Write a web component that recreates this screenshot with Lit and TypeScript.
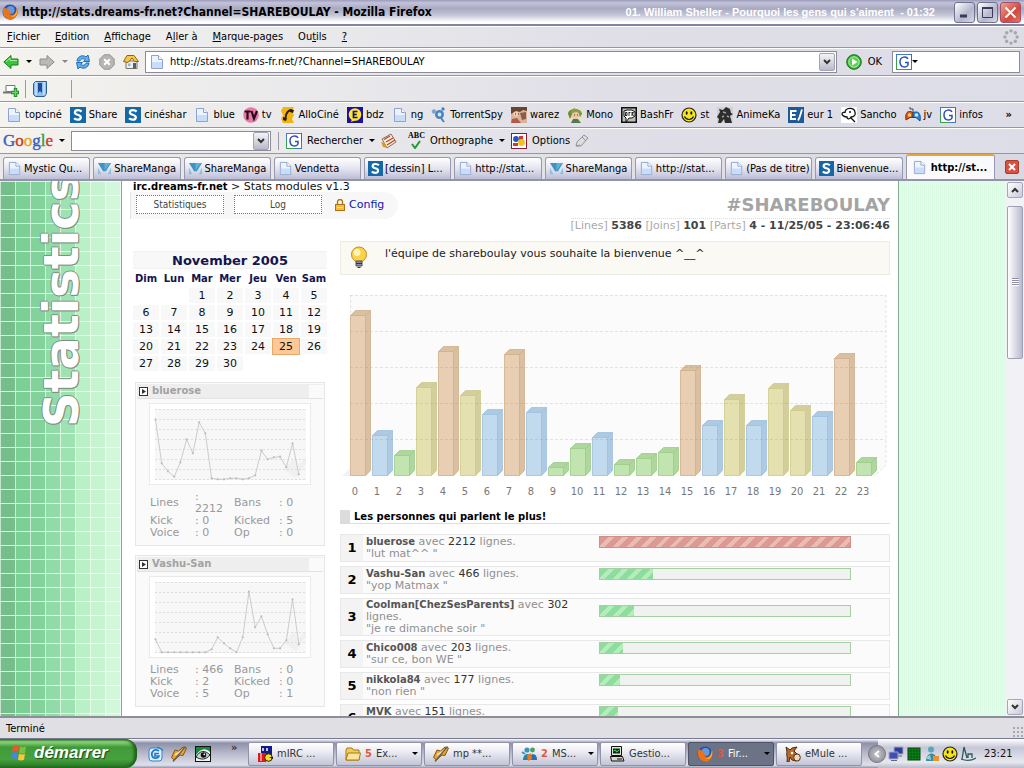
import { LitElement, html, svg, css, nothing, TemplateResult } from "lit";
import { customElement } from "lit/decorators.js";
import { styleMap } from "lit/directives/style-map.js";
import { classMap } from "lit/directives/class-map.js";

const icon = (body: TemplateResult, size = 16) =>
  html`<svg class="icon" width=${size} height=${size} viewBox="0 0 16 16" aria-hidden="true">${body}</svg>`;

const ICONS: Record<string, TemplateResult> = {
  page: svg`<path d="M2.5 1.5h7l4 4v9h-11z" fill="#eef4ff" stroke="#8ea4cc"/><path d="M3 8h10v6H3z" fill="#c9dcfa"/><path d="M9.5 1.5v4h4" fill="#fff" stroke="#8ea4cc"/>`,
  share: svg`<rect width="16" height="16" fill="#1468a8"/><path d="M11.6 4.6C10.600 3.600 9.300 3.200 8 3.200 6.200 3.200 4.900 4 4.900 5.400c0 3 5.900 1.700 5.900 4.800 0 1.600-1.400 2.500-3.200 2.500-1.300 0-2.600-.4-3.500-1.400" fill="none" stroke="#fff" stroke-width="2.300"/>`,
  tv: svg`<circle cx="8" cy="8" r="7.800" fill="#e87aa8"/><path d="M1.500 4.500h6M4.500 4.500v8M8.500 4l2.500 7.500L14 4" fill="none" stroke="#2a0a1a" stroke-width="2.200"/>`,
  allo: svg`<path d="M3 0h11l-2 4 2 4-2 4 2 4H3l-2-4 2-4-2-4z" fill="#f2b411"/><path d="M12 3C8 3 6 6 5.500 11" fill="none" stroke="#2b1a00" stroke-width="1.800"/><path d="M10 2l4 1-1 3-3-1zM3 10l4 1-1 3-3-1z" fill="#2b1a00"/>`,
  bdz: svg`<rect width="16" height="16" fill="#1b0fa8"/><circle cx="8" cy="7.500" r="6.300" fill="#ffe82a"/><path d="M5 12l-1 3 5-2z" fill="#ffe82a"/><path d="M10.500 4.500H6.500v6h4M6.500 7.500h3.300" fill="none" stroke="#1b0f60" stroke-width="1.700"/>`,
  torrent: svg`<circle cx="8.500" cy="7.500" r="3.200" fill="#d8e6f4" stroke="#4c83bd" stroke-width="2.600"/><circle cx="3" cy="4.500" r="2.200" fill="#7aa6d4"/><circle cx="12" cy="2" r="1.700" fill="#4c83bd"/><path d="M10 11l3 4" stroke="#4c83bd" stroke-width="2"/>`,
  warez: svg`<rect width="16" height="16" fill="#d9b49a"/><path d="M0 0h16v4l-4-1-3 2-4-1-5 3z" fill="#6a4536"/><circle cx="5" cy="7" r="2.500" fill="#f0cdb0"/><path d="M9 6l6-1v7l-4 1z" fill="#8f5c4a"/><path d="M1 12l5-1 4 5H0z" fill="#b35a48"/><path d="M4 7h1M7 7h1" stroke="#322"/>`,
  mono: svg`<rect width="16" height="16" fill="#e5e3d4"/><path d="M1 7C1 1 14 0 15 7l-2 3-2-4-6 2-2 4z" fill="#6f8a42"/><circle cx="8.500" cy="8.500" r="3.800" fill="#eec8a2"/><path d="M3 6l8-1 3 5-1-6-6-3z" fill="#8aa04f"/><path d="M4 16l2-4h5l3 4z" fill="#4f7a52"/><path d="M7 8h1M10 8h1" stroke="#433"/>`,
  bfr: svg`<rect width="16" height="16" fill="#111"/><rect x="1.500" y="1.500" width="13" height="13" fill="#b9c1b0"/><path d="M3 4l3-1 5 0 3 2v4l-3 2-3 0-3 4V11l-2-2z" fill="#fff" stroke="#111"/><path d="M4.500 5.500v3.500M4.500 5.500h1.500v3h-1.500M8 5v4M8 5.500h1.500M11 5v4M11 5.500h1.500l-1 1.500 1 2" fill="none" stroke="#111" stroke-width=".9"/>`,
  smile: svg`<circle cx="8" cy="8" r="7" fill="#f4e51c" stroke="#222" stroke-width="1.200"/><ellipse cx="5.700" cy="6" rx="1" ry="1.700" fill="#111"/><ellipse cx="10.300" cy="6" rx="1" ry="1.700" fill="#111"/><path d="M3.500 9.500c2 4 7 4 9 0" fill="none" stroke="#111" stroke-width="1.200"/>`,
  anime: svg`<rect width="16" height="16" fill="#d2d2d2"/><path d="M0 10l3-5-1-3 4 1 3-3 4 2 1 4 2 1-3 2 2 7H8L7 12l-3 4H1l1-4z" fill="#2d2d2d"/><path d="M6 5l3 1M10 9l2 1M5 10l2-1" stroke="#a0a0a0" stroke-width="1.400"/>`,
  e1: svg`<rect width="16" height="16" fill="#1d5a9c"/><path d="M8.500 4H3v8h5M3 8h4.500" fill="none" stroke="#fff" stroke-width="2"/><path d="M14 2.500c-1.500 4-1.500 7-4 11" fill="none" stroke="#fff" stroke-width="1.800"/>`,
  sancho: svg`<rect width="16" height="16" fill="#fff"/><path d="M4 6c0-6 9-6 10-1 1 3-1 5-4 5-2 3-4 2-4 0-3 0-5-2-5-3 0-2 3-2 3-1zM10 11l4 4" fill="#fff" stroke="#111" stroke-width="1.300"/><circle cx="9" cy="5" r="1" fill="#111"/>`,
  pad: svg`<path d="M1 13C0 7 2 4.500 4.500 4.500S7 5.500 8 5.500v5H5z" fill="#e3571c" stroke="#7d2a08"/><path d="M15 14c1-6-1-9-3.500-9S9 5.500 8 5.500v5h3z" fill="#2b8fe0" stroke="#144a80"/><circle cx="4.500" cy="8" r="1.700" fill="#ffd36a"/><circle cx="11.500" cy="8" r="1.700" fill="#c8eaff"/><path d="M8 5V2h-3V0" fill="none" stroke="#444"/>`,
  g: svg`<rect x=".5" y=".5" width="15" height="15" fill="#fff" stroke="#4a76c8"/><path d="M.5 6v9.500H9" fill="none" stroke="#3aa04a"/><path d="M15.500 0v9" stroke="#cc3a2a"/><path d="M12 5C10.500 2 4 2 4 8s6.500 6 8 3V8.500H9" fill="none" stroke="#2a4fb4" stroke-width="1.500"/>`,
  manga: svg`<path d="M1 2h14L9.500 11h-3z" fill="#3f93c4"/><path d="M8 2h6L8 10z" fill="#5fb0d8"/><path d="M1 7l3.500 7H1zM15 7l-3.500 7H15z" fill="#8cc0e0"/>`,
  fox: svg`<circle cx="8" cy="8" r="7.500" fill="#2b4fa8"/><circle cx="8.500" cy="6" r="4" fill="#5f9be0"/><path d="M2 3C-1 8 2 15.500 8 15.700c6 0 9-6 7-12-1 3-1 5-3 6.500-2 1.300-4 .8-5-1 1 .2 2-.3 2-1L6.500 7 7 4.700C5 5 3.500 4.500 2 3z" fill="#e8731a"/><path d="M14.800 3.500c.5 5-1.800 8.500-5.800 9 3.500 1.500 7.500-2.500 5.800-9z" fill="#f7c52a"/>`,
  back: svg`<path d="M.8 8L8 1.500V5h7v6H8v3.500z" fill="#3cc43c" stroke="#16801a"/><path d="M3 7.800L7 4v2.500h7" fill="none" stroke="#a5eda0"/>`,
  forward: svg`<path d="M15.200 8L8 1.500V5H1v6h7v3.500z" fill="#b9b9b9" stroke="#8d8d8d"/>`,
  reload: svg`<path d="M2 7C2.500 2 8 .5 11 3l2-2 1.500 6.500H8.500l1.700-2C8 4 5.500 5 5 7z" fill="#5ab4f0" stroke="#1c5fa8" stroke-width=".9"/><path d="M14 9c-.5 5-6 6.500-9 4l-2 2L1.500 8.500h6l-1.700 2C8 12 10.500 11 11 9z" fill="#5ab4f0" stroke="#1c5fa8" stroke-width=".9"/>`,
  stop: svg`<path d="M5 .8h6L15.200 5v6L11 15.200H5L.8 11V5z" fill="#b5b5b5" stroke="#969696"/><path d="M5.200 5.200l5.600 5.600M10.800 5.200l-5.600 5.600" stroke="#fff" stroke-width="2"/>`,
  home: svg`<path d="M3 7v7.500h11V7z" fill="#f2ede2" stroke="#7b7669"/><path d="M.5 7.500L4 1.500h7l4.500 6h-4L9 4 5 8.500z" fill="#f5c64a" stroke="#8a6414"/><path d="M10 9h3v5.500h-3z" fill="#515c78"/><path d="M5 9.500h2.500V12H5z" fill="#7fb8ea"/>`,
  throbber: svg`<g fill="#a6a6ac">${[0, 45, 90, 135, 180, 225, 270, 315].map((a) => svg`<circle cx="8" cy="1.900" r="1.700" transform="rotate(${a} 8 8)"/>`)}</g>`,
  go: svg`<circle cx="8" cy="8" r="7.300" fill="#2fae2a" stroke="#17701a"/><circle cx="8" cy="8" r="5.300" fill="#5fce52" stroke="#d8f5d2" stroke-width=".8"/><path d="M6 4.500L11.500 8 6 11.500z" fill="#fff"/>`,
  newtab: svg`<path d="M3 4.500h9v6H3z" fill="#fff" stroke="#777"/><path d="M0 11.500h9" stroke="#777" stroke-width="2"/><path d="M12.500 7v9M8 11.500h8" stroke="#1f8f2c" stroke-width="3.400"/><path d="M12.500 8v7M9 11.500h6" stroke="#6ed468" stroke-width="1.400"/>`,
  book: svg`<path d="M1.500 2.500l2-2h11v12l-2 3h-9l-2-2z" fill="#8fc0ee" stroke="#2b5d9c"/><path d="M4 1v13M12 1v13" stroke="#e8f3ff"/><path d="M6 2h4v10l-2-2-2 2z" fill="#1c4f96"/>`,
  news: svg`<path d="M1 6l9-5 5 8-9 6z" fill="#f4ead6" stroke="#84705a"/><path d="M3 6.500l6-3.500M5 9l7-4M6 12l8-5" stroke="#b34a34" stroke-width="1.300"/><path d="M0 9l4 1 2 5-4-1z" fill="#d89a2a"/>`,
  options: svg`<rect x=".5" y=".5" width="15" height="15" fill="#fff" stroke="#8a1a3a"/><path d="M8 3h4v4H8z" fill="#d83a2a"/><circle cx="5" cy="6" r="2.900" fill="#2a55c0"/><circle cx="10.500" cy="9.500" r="3.400" fill="#f2c21c"/><path d="M2 10h5v3H2z" fill="#d83a2a"/>`,
  pen: svg`<path d="M2 13l1-4 7-7 4 3-7 8z" fill="#dedde0" stroke="#93929a"/><path d="M8 4l4 4M2 13l4-1" stroke="#93929a"/>`,
  e: svg`<rect x="2" y="2" width="13" height="13" rx="3" fill="#dff0fc" stroke="#2f86cf"/><path d="M12 5C7 2 4 6 5 9.500 6 13 11 13 12 10H8V7.500h4" fill="none" stroke="#2479c4" stroke-width="1.700"/><path d="M10 1l6 3" stroke="#2f86cf" stroke-width="1.500"/>`,
  amp: svg`<path d="M.5 11.500L4 4l3.500 1L12 1l3.500 1L12 9.500l-3-.5-5.500 5z" fill="#f0a52a" stroke="#7d5314"/><path d="M4 9l8-5" stroke="#fbe0a0" stroke-width="1.600"/><path d="M14.500.5L2 15.500" stroke="#5e6064" stroke-width="1.300"/>`,
  eye: svg`<rect x=".5" y=".5" width="15" height="15" fill="#f0f4f0" stroke="#111"/><path d="M1 1h14v5C10 1 5 3 1 9z" fill="#138a3a"/><path d="M1 11c4-7 9-7 14-2-4 5-9 5-14 2z" fill="#c6d6de" stroke="#222"/><circle cx="8.500" cy="9" r="2.800" fill="#111"/><circle cx="9.300" cy="8.300" r=".9" fill="#fff"/>`,
  mirc: svg`<rect x="4" y="0" width="11" height="9" fill="#111a8a"/><path d="M6 2v3M10 2v3" stroke="#fff" stroke-width="1.500"/><rect x="1" y="7" width="8" height="9" fill="#e01818"/><path d="M4 7v8" stroke="#fff"/><circle cx="11.500" cy="11.500" r="3.800" fill="#f6dc1a" stroke="#222"/><path d="M12 11h4v2z" fill="#111"/>`,
  folder: svg`<path d="M1 4l1-2h5l1.500 2H14v10H1z" fill="#f4ca58" stroke="#a67a18"/><path d="M3 7h12.500L14 14H1z" fill="#fce59a" stroke="#a67a18"/>`,
  msn: svg`<circle cx="6" cy="4" r="2.600" fill="#3f94bc"/><path d="M2 14c0-7 8-9 8 0z" fill="#2f7ea6"/><circle cx="11.500" cy="4" r="2.400" fill="#4aa05a"/><path d="M8 14c0-7 8-8 8 0z" fill="#2e6ea8"/><path d="M6 9l4-2 1 6-4 2z" fill="#e87824"/><path d="M1 6l3 2" stroke="#3f94bc" stroke-width="2"/>`,
  pc: svg`<path d="M2.500.500h10v9h-10z" fill="#e4e4dc" stroke="#111"/><path d="M4 2.500h7v5H4z" fill="#062a10"/><path d="M4.500 5l2-1 1 2 3-2" fill="none" stroke="#45e068"/><path d="M1.500 10.500h12l1.500 4.500H2.500z" fill="#d6d6cc" stroke="#111"/><path d="M8 13h5" stroke="#111"/>`,
  emule: svg`<path d="M2 16C3 11 1 9 2 6l-1-5 4 3 2-2 5-1-3 4 4 4 1 3-3 3-4-1-2-3-1 5z" fill="#b86a2c" stroke="#4f2a10"/><ellipse cx="12" cy="11.500" rx="3.300" ry="3.600" fill="#ecd9c0" stroke="#4f2a10"/><circle cx="7" cy="7" r="1.200" fill="#fff"/>`,
  net: svg`<path d="M6 1h9v7H6z" fill="#2d3c9c" stroke="#a6a9bf"/><path d="M1 6h9v7H1z" fill="#3c50b8" stroke="#a6a9bf"/><path d="M3 14.500h6M10 10h4" stroke="#667"/>`,
  green: svg`<rect x="2" y="2" width="12" height="12" fill="#0a8a1a" stroke="#053f0c"/><path d="M2 5h12M2 8h12M2 11h12M5 2v12M8 2v12M11 2v12" stroke="#04500e" stroke-width=".8"/>`,
  buddy: svg`<circle cx="7" cy="3.500" r="3" fill="#56a9b8"/><path d="M2 15c0-9 10-11 11 0z" fill="#3b8ea0"/><path d="M1 12l5-3 1 5z" fill="#9fd0da"/><path d="M9 10l6 0v5H9z" fill="#e8932e"/>`,
  sail: svg`<path d="M2 13L4 1l3 11M8 12V8h4v4M1 13c5 2 10 2 15-1" fill="none" stroke="#2a5a5a" stroke-width="1.300"/>`,
};

@customElement("app-root")
export class AppRoot extends LitElement {
  static styles = css`
    :host { display: block; height: 100vh; overflow: hidden; font: 11px/13px "DejaVu Sans Condensed", "DejaVu Sans", sans-serif; color: #000; }
    * { box-sizing: border-box; }
    button { font: inherit; color: inherit; background: none; border: 0; padding: 0; margin: 0; display: inline-flex; align-items: center; white-space: nowrap; }
    a { color: inherit; text-decoration: none; }
    input { font: inherit; border: 0; padding: 0; outline: 0; background: none; min-width: 0; }
    .icon { display: block; flex: none; }
    .screen { display: flex; flex-direction: column; height: 100%; }
    .screen > * { flex: none; }

    .title { height: 26px; display: flex; align-items: center; padding: 0 3px 0 2px; gap: 4px; border-bottom: 2px solid #8384a0;
      background: linear-gradient(#9c9cbb, #c3c4d9 12%, #a9aac2 35%, #c0c1d3 60%, #fff 92%); }
    .title h1 { margin: 0; font-size: 12px; line-height: 16px; font-weight: bold; flex: 1; white-space: nowrap; }
    .song { font: bold 11px/14px "Liberation Sans", sans-serif; color: #fff; margin-right: 15px; white-space: pre; }
    .wins { display: flex; gap: 2px; }
    .win { width: 21px; height: 21px; border-radius: 3px; border: 1px solid #6f7290; background: linear-gradient(135deg, #fff, #b4b6cc 60%, #d8d9e6); justify-content: center; }
    .win.close { background: linear-gradient(135deg, #f0a093, #d14a3c 60%, #e27264); border-color: #a5506a; }

    .bar { display: flex; align-items: center; background: linear-gradient(90deg, #f4f3ee, #e0dfe8 60%, #dddde7); border-bottom: 1px solid #9796a6; box-shadow: inset 0 1px #fff; }
    .menu { height: 22px; padding: 0 5px 0 7px; gap: 15px; }
    .grow { flex: 1; }
    .nav { height: 28px; padding: 0 4px 0 3px; }
    .navs { display: flex; align-items: center; gap: 8px; width: 142px; }
    .nav .icon { width: 16px; }
    .caret { width: 0; height: 0; border: 3px solid transparent; border-top-color: #000; border-bottom: 0; flex: none; }
    .caret.off { border-top-color: #888; }
    .navs .caret { margin: 0 -1px; }
    .field { display: flex; align-items: center; background: #fff; border: 1px solid #8b8b9a; height: 22px; }
    .field input { flex: 1; }
    .url { flex: 1; padding-left: 3px; gap: 5px; }
    .drop { width: 16px; height: 18px; margin-right: 1px; justify-content: center; background: linear-gradient(#f4f4f7, #b9bac8); border: 1px solid #a2a3b4; border-radius: 2px; }
    .ok { gap: 6px; margin: 0 10px 0 9px; }
    .search { width: 128px; padding-left: 3px; }
    .tools { height: 26px; padding-left: 3px; }
    .sep { width: 1px; height: 18px; background: #9a9aa6; }
    .tools .sep { margin: 0 6px; }
    .tools .sep.far { margin-left: 23px; }
    .marks { height: 26px; padding: 0 12px 0 6px; gap: 8px; white-space: nowrap; }
    .marks button { margin-left: auto; }
    .marks a { display: flex; align-items: center; gap: 3px; }
    .google { height: 26px; padding-left: 3px; gap: 4px; }
    .logo { font: 17px/20px "Liberation Serif", serif; display: inline-flex; -webkit-text-stroke: 0.4px; }
    .cb { color: #3a5fc4; } .cr { color: #cf3a2c; } .cy { color: #e0ac1a; } .cg { color: #3a9a4a; }
    .google .field { width: 200px; height: 20px; }
    .google button { gap: 5px; }
    .google .caret { margin: 0 2px; }
    .google .sep { margin: 0 3px; }
    .google .wide { margin-right: 7px; }
    .abc { display: grid; justify-items: center; font: bold 8px/8px "Liberation Serif", serif; }

    .tabs { height: 27px; display: flex; align-items: flex-end; padding-left: 3px; gap: 3px; background: linear-gradient(90deg, #eceae8, #d9d9e3); border-bottom: 2px solid #9494a8; }
    .tab { flex: 1; height: 22px; padding: 0 0 0 3px; gap: 2px; border: 1px solid #9899ae; border-bottom: 0; border-radius: 3px 3px 0 0; background: linear-gradient(#fff, #e4e4ef 50%, #bdbed6); min-width: 0; }
    .tab.on { height: 25px; background: #fafafc; border-top: 2px solid #e6a63a; font-weight: bold; padding-left: 5px; gap: 4px; }
    .tabclose { width: 14px; height: 14px; margin: 0 5px 5px 7px; justify-content: center; background: #d9503f; border: 1px solid #a83a30; border-radius: 2px; }

    .screen > .view { flex: 1; min-height: 0; display: flex; overflow: hidden; background: #fff; font-family: "DejaVu Sans", sans-serif; line-height: 12px; color: #909090; }
    .rail { flex: none; width: 122px; overflow: hidden; border-right: 1px solid #82ab8c; padding: 0 0 0 38px;
      background: repeating-linear-gradient(90deg, #fff9 0 1px, transparent 1px 15px), repeating-linear-gradient(#fffb 0 1px, transparent 1px 14px),
      linear-gradient(90deg, #76bd8c 15px, #7ccf95 15px 30px, #84d29b 30px 45px, #90dba8 45px 60px, #9ee2b2 60px 75px, #b9f0c5 75px 90px, #c6f4d0 90px 105px, #d3f7da 105px); }
    .rail h2 { margin: 0; height: 246px; font-size: 48px; line-height: 46px; font-weight: bold; color: #fff; writing-mode: vertical-rl; transform: rotate(180deg); white-space: nowrap; text-shadow: -1px 0 #7f8f84, 1px 0 #7f8f84, 0 1px #7f8f84, 0 -1px #7f8f84, -1px 1px #7f8f84; }
    .paper { flex: 1; min-width: 0; overflow: hidden; padding: 0 8px; }
    .side { flex: none; width: 108px; border-left: 1px solid #82ab8c; background: repeating-linear-gradient(90deg, #e2fde9 0 1px, #dcfbe4 1px 2px); }
    .scroll { flex: none; width: 18px; padding: 1px; display: flex; flex-direction: column; background: #f2f2f6; }
    .arrow { height: 16px; width: 16px; border: 1px solid #a5a6ba; border-radius: 2px; background: linear-gradient(135deg, #fff, #c9cad8); justify-content: center; }
    .track { flex: 1; padding-top: 8px; }
    .thumb { height: 31%; border: 1px solid #9fa0b4; border-radius: 2px; background: linear-gradient(90deg, #fff, #dcdce6 50%, #babbcc); display: grid; place-items: center; }
    .grip { width: 7px; height: 8px; background: repeating-linear-gradient(#8f90a4 0 1px, #fff 1px 2px); }

    .head { display: flex; justify-content: space-between; }
    .crumb { color: #111; line-height: 11px; padding-left: 3px; }
    b { font-size: 10px; }
    .crumb b { color: #000; }
    .pill { display: flex; align-items: center; width: 268px; height: 27px; padding: 0 0 2px 5px; background: #f7f7f7; border-left: 1px solid #e4e4e4; border-radius: 0 14px 14px 0; }
    .dotted { width: 88px; height: 19px; margin-right: 10px; justify-content: center; border: 1px dotted #777; background: #fff; color: #444; font: 10px/12px "DejaVu Sans Condensed", sans-serif; }
    .config { display: flex; align-items: center; gap: 4px; margin-left: 3px; color: #1414b4; }
    .chan { text-align: right; padding-top: 11px; }
    .chan h2 { margin: 0; font-size: 18px; line-height: 26px; color: #a4a4a4; }
    .chan p { margin: 0; line-height: 14px; border-top: 1px dotted #ddd; color: #aaa; }
    .chan b { color: #444; font-size: 11px; }
    .cols { display: flex; }
    .left { flex: none; width: 210px; padding: 18px 0 0 1px; display: flex; flex-direction: column; gap: 9px; }
    .right { flex: 1; min-width: 0; padding-top: 8px; }

    .cal { border-spacing: 2px; width: 198px; table-layout: fixed; color: #111; font-size: 10px; text-align: center; }
    .cal caption { margin: 0 2px; padding-top: 1px; line-height: 15px; background: #f8f8f8; border: solid #f0f0f0; border-width: 1px 0; font-size: 13px; font-weight: bold; color: #14144e; }
    .cal th, .cal td { padding: 0; height: 15px; line-height: 15px; }
    .cal th { color: #14144e; }
    .cal td { font-size: 11px; }
    .cal .d { background: #f8f8f8; }
    .cal .today { background: #fbc896; box-shadow: 0 0 0 1px #eaa768; }

    .card { width: 190px; margin-left: 4px; border: 1px solid #e6e6e6; background: #fafafa; padding: 1px 1px 6px; }
    .card h3 { margin: 0; height: 15px; display: flex; align-items: center; gap: 4px; padding-left: 2px; background: #eee; border-bottom: 1px solid #e2e2e2; font-size: 10px; color: #a2a2a2; }
    .card h3 i { margin-left: auto; width: 14px; height: 13px; background: #fafafa; }
    .graph { display: block; margin: 4px 0 6px 12px; border: 1px solid #eaeaea; background: #fff; }
    .stats { border-collapse: collapse; margin-left: 13px; width: 160px; table-layout: fixed; color: #999; }
    .stats td, .stats th { padding: 0; font-weight: normal; text-align: left; }
    .stats td { padding-right: 5px; }
    .c1, .c3 { width: 45px; } .c2 { width: 39px; }

    .info { display: flex; align-items: center; gap: 17px; height: 34px; padding: 0 9px; border: 1px solid #ecece0; background: #faf9f3; color: #222; }
    .info p { margin: 0 0 8px; }
    .chart { display: block; width: 100%; margin: 5px 0 10px; }
    .chart text { font: 11px "DejaVu Sans Condensed", sans-serif; fill: #777; text-anchor: middle; }
    .right h3 { margin: 0 0 10px; display: flex; gap: 4px; font-size: 10px; line-height: 13px; height: 14px; color: #000; border-bottom: 1px solid #ddd; }
    .right h3 i { width: 10px; background: #dcdcdc; }
    ol { list-style: none; margin: 0; padding: 0; display: grid; gap: 4px; }
    li { display: grid; grid-template-columns: 22px 236px 252px; min-height: 28px; border: 1px solid #e8e8e8; background: #fbfbfb; align-items: center; }
    .rank { align-self: stretch; display: grid; place-items: center; background: #f3f3f3; font-size: 13px; font-weight: bold; color: #000; }
    .who { padding: 0 4px 0 3px; }
    .who b { color: #555; } .who span { color: #333; }
    .meter { height: 12px; margin-bottom: 12px; border: 1px solid #a6cfa2; background: #f0f2ef; }
    .meter.hot { border-color: #cf9088; }
    .fill { height: 100%; background: repeating-linear-gradient(135deg, #8ddd9c 0 6px, #b4ecbd 6px 10px); }
    .hot .fill { background: repeating-linear-gradient(135deg, #dc9a92 0 6px, #e9bcb5 6px 10px); }

    .status { height: 22px; display: flex; align-items: center; padding-left: 6px; border-top: 2px solid #8e8e98; background: #e0dfe4; }
    .status .corner { margin-left: auto; align-self: flex-end; width: 12px; height: 12px; background: radial-gradient(#a8a8b2 1px, transparent 1px) 0 0 / 4px 4px; }
    .task { height: 30px; display: flex; align-items: center; border-top: 1px solid #777a90; background: linear-gradient(#fff, #8f91aa 14%, #b8b9cb 50%, #e0e0ea 90%, #8f91aa); color: #333; }
    .start { width: 137px; height: 29px; padding: 0 0 2px 10px; gap: 6px; border-radius: 0 12px 12px 0; background: linear-gradient(#2c7a2a, #8ed47c 10%, #3f9a38 28%, #47a23e 70%, #23701f); box-shadow: inset -3px 0 3px #1f5f1c; color: #fff; font: italic bold 17px/20px "Liberation Sans", sans-serif; text-shadow: 1px 1px 1px #1d4a1a; }
    .quick { display: flex; align-items: center; gap: 8px; width: 111px; padding-left: 10px; }
    .quick span { margin: -12px 0 0 12px; font-weight: bold; }
    .jobs { display: flex; gap: 2px; flex: 1; min-width: 0; }
    .job { width: 86px; height: 24px; padding: 0 3px 0 8px; gap: 4px; border: 1px solid #9193a8; border-radius: 2px; background: linear-gradient(#fff, #ebebf2 40%, #c3c4d6); }
    .job .count { color: #e2583a; font-weight: bold; }
    .job .caret { margin-left: auto; }
    .job.on { background: #6c7386; color: #fff; border-color: #4e5366; }
    .tray { display: flex; align-items: center; gap: 2px; align-self: stretch; width: 146px; background: linear-gradient(#fff, #c6c7d8 30%, #e8e8ef 80%, #b9bacb); }
    .round { width: 18px; height: 18px; margin: 0 0 0 -10px; border-radius: 50%; border: 1px solid #777; background: radial-gradient(#c8c8d0, #82828e); justify-content: center; }
    .clock { margin-left: 6px; color: #111; }
  `;

  private menu = [["", "F", "ichier"], ["", "E", "dition"], ["", "A", "ffichage"], ["A", "l", "ler à"], ["", "M", "arque-pages"], ["Ou", "t", "ils"], ["", "?", ""]];
  private marks = [["page", "topciné"], ["share", "Share"], ["share", "cinéshar"], ["page", "blue"], ["tv", "tv"], ["allo", "AlloCiné"], ["bdz", "bdz"], ["page", "ng"], ["torrent", "TorrentSpy"], ["warez", "warez"], ["mono", "Mono"], ["bfr", "BashFr"], ["smile", "st"], ["anime", "AnimeKa"], ["e1", "eur 1"], ["sancho", "Sancho"], ["pad", "jv"], ["g", "infos"]];
  private tabs = [["page", "Mystic Qu..."], ["manga", "ShareManga"], ["manga", "ShareManga"], ["page", "Vendetta"], ["share", "[dessin] L..."], ["page", "http://stat..."], ["manga", "ShareManga"], ["page", "http://stat..."], ["page", "(Pas de titre)"], ["share", "Bienvenue..."], ["page", "http://st..."]];
  private bars = [160, 40, 20, 88, 124, 80, 61, 121, 63, 8, 27, 38, 11, 17, 23, 105, 50, 76, 50, 87, 65, 59, 117, 13];
  private cards = [
    { name: "bluerose", pts: [15.7, 59.3, 67.3, 72.7, 58.3, 35.3, 49.3, 18.3, 29.3, 74.3, 75.3, 75.3, 74.3, 74.3, 75.3, 74.3, 71.3, 46.7, 55.3, 53.3, 52.7, 63.3, 39.3, 70.3],
      rows: [["Lines", 2212, "Bans", 0], ["Kick", 0, "Kicked", 5], ["Voice", 0, "Op", 0]] },
    { name: "Vashu-San", pts: [62.3, 75.3, 75.3, 75.3, 75.3, 75.3, 75.3, 75.3, 75.3, 72.3, 60.3, 66.3, 71.3, 75.3, 60.3, 14.7, 50.3, 39.3, 57.3, 71.3, 71.3, 63.3, 22.3, 67.3],
      rows: [["Lines", 466, "Bans", 0], ["Kick", 2, "Kicked", 0], ["Voice", 5, "Op", 1]] },
  ];
  private top = [["bluerose", 2212, "lut mat^^ ", 100], ["Vashu-San", 466, "yop Matmax ", 21], ["Coolman[ChezSesParents]", 302, "je re dimanche soir ", 13.5], ["Chico008", 203, "sur ce, bon WE ", 9], ["nikkola84", 177, "non rien ", 8], ["MVK", 151, "", 7]] as [string, number, string, number][];
  private jobs = [["mirc", "", "mIRC ..."], ["folder", "5", "Ex..."], ["amp", "", "mp **..."], ["msn", "2", "MS..."], ["pc", "", "Gestio..."], ["fox", "3", "Fir..."], ["emule", "", "eMule ..."]];

  private chevron(up = false) {
    return html`<svg width="8" height="6" viewBox="0 0 8 6" aria-hidden="true"><path d=${up ? "M1 5l3-3 3 3" : "M1 1l3 3 3-3"} fill="none" stroke="#333" stroke-width="2"/></svg>`;
  }

  private bar(h: number, i: number) {
    const [face, shade, line] = h > 100 ? ["#e8cfb4", "#d9c0a0", "#d2ae8a"] : h > 64 ? ["#e4e0b0", "#d3cf9c", "#cdc98c"] : h > 35 ? ["#c2daee", "#adcae2", "#9dc0de"] : ["#c2e4b0", "#afd69c", "#9ccb8a"];
    const x = 10.5 + i * 22, b = 195.500, t = b - h;
    return svg`<g stroke=${line} stroke-width=".8"><path d="M${x} ${t}l5-5h15l-5 5z" fill=${shade}/><path d="M${x + 15} ${t}l5-5v${h}l-5 5z" fill=${shade}/><path d="M${x} ${t}h15v${h}h-15z" fill=${face}/></g>`;
  }

  private chart() {
    return html`<svg class="chart" viewBox="0 0 550 220" role="img" aria-label="Activité par heure">
      <path d="M10 15h536v170l-10 11H10z" fill="#fbfbfb"/>
      <path d="M2 196l8-8v8z" fill="#f0f2f8"/>
      ${this.bars.map((h, i) => this.bar(h, i))}
      <g stroke="#88888838" stroke-dasharray="3 2">${[15.5, 51.5, 87.5, 123.5, 159.5].map((y) => svg`<path d="M10 ${y}H546"/>`)}<path d="M546 15v170l-10 10M10.500 15v20" fill="none"/></g>
      ${this.bars.map((_, i) => svg`<text x=${15 + i * 22 + (i > 9 ? 2 : 0)} y="215">${i}</text>`)}
    </svg>`;
  }

  private spark(pts: number[]) {
    const xy = pts.map((y, i) => [5.500 + i * 6.230, y]);
    return html`<svg class="graph" width="162" height="82" viewBox="0 0 160 80" role="img" aria-label="Courbe d'activité">
      <path d="M5 5h151v71H5z" fill="#f7f7f7"/><path d="M134 66l10-12 3 8 9-8v6l-10 14z" fill="#f0f0f0"/>
      <g stroke="#ddd" stroke-dasharray="2 2">${[5.500, 15.500, 25.500, 35.500, 45.500, 55.500, 65.500, 75.500].map((y) => svg`<path d="M5 ${y}h151"/>`)}</g>
      <polyline points=${xy.map((p) => p.join(",")).join(" ")} fill="none" stroke="#c6c6c6" stroke-width=".9"/>
      ${xy.map(([x, y]) => svg`<circle cx=${x} cy=${y} r="1.100" fill="#bdbdbd"/>`)}
    </svg>`;
  }

  private calendar() {
    const weeks = [0, 1, 2, 3, 4].map((w) => [0, 1, 2, 3, 4, 5, 6].map((d) => w * 7 + d - 1));
    return html`<table class="cal"><caption>November 2005</caption>
      <thead><tr>${["Dim", "Lun", "Mar", "Mer", "Jeu", "Ven", "Sam"].map((d) => html`<th scope="col">${d}</th>`)}</tr></thead>
      <tbody>${weeks.map((w) => html`<tr>${w.map((d) => d > 0 && d < 31 ? html`<td class=${classMap({ d: true, today: d === 25 })}>${d}</td>` : html`<td></td>`)}</tr>`)}</tbody></table>`;
  }

  render() {
    return html`<div class="screen">
      <header class="title">${icon(ICONS.fox)}<h1>http://stats.dreams-fr.net?Channel=SHAREBOULAY - Mozilla Firefox</h1>
        <span class="song">01. William Sheller - Pourquoi les gens qui s'aiment  - 01:32</span>
        <div class="wins">
          <button class="win" aria-label="Réduire"><svg width="13" height="13"><path d="M2 10h7" stroke="#3b3d58" stroke-width="3"/></svg></button>
          <button class="win" aria-label="Agrandir"><svg width="13" height="13"><path d="M1.500 2.500h10v9h-10z" fill="none" stroke="#3b3d58"/><path d="M1 2h11" stroke="#3b3d58" stroke-width="2"/></svg></button>
          <button class="win close" aria-label="Fermer"><svg width="13" height="13"><path d="M1.500 1.500l10 10M11.500 1.500l-10 10" stroke="#fff" stroke-width="2"/></svg></button>
        </div></header>
      <nav class="bar menu">${this.menu.map(([a, k, z]) => html`<button>${a}<u>${k}</u>${z}</button>`)}<span class="grow"></span>${icon(ICONS.throbber)}</nav>
      <div class="bar nav">
        <div class="navs">
          <button aria-label="Précédent">${icon(ICONS.back)}</button><i class="caret"></i>
          <button aria-label="Suivant">${icon(ICONS.forward)}</button><i class="caret off"></i>
          <button aria-label="Actualiser">${icon(ICONS.reload)}</button><button aria-label="Arrêter">${icon(ICONS.stop)}</button><button aria-label="Accueil">${icon(ICONS.home)}</button>
        </div>
        <div class="field url">${icon(ICONS.page)}<input aria-label="Adresse" value="http://stats.dreams-fr.net/?Channel=SHAREBOULAY"><button class="drop" aria-label="Historique">${this.chevron()}</button></div>
        <button class="ok">${icon(ICONS.go)}OK</button>
        <div class="field search">${icon(ICONS.g)}<i class="caret"></i><input aria-label="Recherche"></div>
      </div>
      <div class="bar tools"><button aria-label="Nouvel onglet">${icon(ICONS.newtab)}</button><i class="sep"></i><button aria-label="Marque-pages">${icon(ICONS.book)}</button><i class="sep far"></i></div>
      <nav class="bar marks">${this.marks.map(([i, t]) => html`<a href="#">${icon(ICONS[i])}${t}</a>`)}<button aria-label="Plus"><strong>»</strong></button></nav>
      <div class="bar google">
        <button class="logo" aria-label="Google"><span><span class="cb">G</span><span class="cr">o</span><span class="cy">o</span><span class="cb">g</span><span class="cg">l</span><span class="cr">e</span></span></button><i class="caret"></i>
        <div class="field"><input aria-label="Recherche Google"><button class="drop" aria-label="Recherches">${this.chevron()}</button></div>
        <i class="sep"></i>
        <button>${icon(ICONS.g)}Rechercher</button><i class="caret"></i>
        <button class="wide" aria-label="Actualités">${icon(ICONS.news)}</button>
        <button><span class="abc">ABC<svg width="10" height="9" viewBox="0 0 10 9"><path d="M1 4l3 4 5-7" fill="none" stroke="#1f9a38" stroke-width="2"/></svg></span>Orthographe</button><i class="caret"></i>
        <button>${icon(ICONS.options)}Options</button><button aria-label="Surligner">${icon(ICONS.pen)}</button>
      </div>
      <div class="tabs" role="tablist">${this.tabs.map(([i, t], n) => html`<button role="tab" aria-selected=${n === 10 ? "true" : "false"} class=${classMap({ tab: true, on: n === 10 })}>${icon(ICONS[i], 15)}${t}</button>`)}
        <button class="tabclose" aria-label="Fermer l'onglet"><svg width="10" height="10"><path d="M2 2l6 6M8 2l-6 6" stroke="#fff" stroke-width="2"/></svg></button></div>
      <main class="view">
        <aside class="rail"><h2>Statistics</h2></aside>
        <div class="paper">
          <div class="head">
            <div><div class="crumb"><b>irc.dreams-fr.net</b> &gt; Stats modules v1.3</div>
              <div class="pill"><button class="dotted">Statistiques</button><button class="dotted">Log</button>
                <a class="config" href="#"><svg width="10" height="12" viewBox="0 0 10 12"><path d="M2.500 6V3a2.500 2.500 0 015 0v3" fill="none" stroke="#a8781a" stroke-width="1.400"/><rect x=".5" y="5.500" width="9" height="6" fill="#f4bd3a" stroke="#b0701a"/><path d="M2 8.500h6" stroke="#fbe39a"/></svg>Config</a></div></div>
            <div class="chan"><h2>#SHAREBOULAY</h2><p>[Lines] <b>5386</b> [Joins] <b>101</b> [Parts] <b>4 - 11/25/05 - 23:06:46</b></p></div>
          </div>
          <div class="cols">
            <div class="left">${this.calendar()}
              ${this.cards.map((c) => html`<section class="card">
                <h3><svg width="9" height="9"><rect x=".5" y=".5" width="8" height="8" fill="#fff" stroke="#333"/><path d="M3 2l4 2.500L3 7z" fill="#333"/></svg>${c.name}<i></i></h3>
                ${this.spark(c.pts)}
                <table class="stats"><colgroup><col class="c1"><col class="c2"><col class="c3"><col></colgroup>
                ${c.rows.map(([a, b, d, e]) => html`<tr><th scope="row">${a}</th><td>: ${b}</td><th scope="row">${d}</th><td>: ${e}</td></tr>`)}</table>
              </section>`)}
            </div>
            <div class="right">
              <div class="info"><svg width="18" height="24" viewBox="0 0 18 24"><circle cx="9" cy="8.500" r="7.500" fill="#fbd24a" stroke="#c08a1a"/><circle cx="7" cy="6.500" r="3.500" fill="#fff3b8"/><path d="M6 15h6v5H6z" fill="#8d8f9c" stroke="#4c4d58"/><path d="M6 17.500h6M7.500 21.500h3" stroke="#333"/></svg>
                <p>l'équipe de shareboulay vous souhaite la bienvenue ^__^</p></div>
              ${this.chart()}
              <h3><i></i>Les personnes qui parlent le plus!</h3>
              <ol>${this.top.map(([n, c, q, p], i) => html`<li><div class="rank">${i + 1}</div>
                <div class="who"><b>${n}</b> avec <span>${c}</span> lignes.${q ? html`<br>"${q}"` : html`<br>&nbsp;`}</div>
                <div class=${classMap({ meter: true, hot: p === 100 })}><div class="fill" style=${styleMap({ width: p + "%" })}></div></div></li>`)}</ol>
            </div>
          </div>
        </div>
        <div class="side"></div>
        <div class="scroll"><button class="arrow" aria-label="Haut">${this.chevron(true)}</button><div class="track"><div class="thumb"><i class="grip"></i></div></div><button class="arrow" aria-label="Bas">${this.chevron()}</button></div>
      </main>
      <div class="status">Terminé<i class="corner"></i></div>
      <footer class="task">
        <button class="start"><svg width="18" height="18" viewBox="0 0 18 18"><path d="M3 2c2-1 4-1 6 0L8 8C6 7 4 7 2 8z" fill="#e8582c"/><path d="M10 2.500c2 1 4 1 6 0L15 9c-2 1-4 1-6 0z" fill="#7cc043"/><path d="M2 9c2-1 4-1 6 0l-1 6c-2-1-4-1-6 0z" fill="#4a86e0"/><path d="M9 9.800c2 1 4 1 6 0l-1 6c-2 1-4 1-6 0z" fill="#f6c83a"/></svg>démarrer</button>
        <div class="quick">${icon(ICONS.e)}${icon(ICONS.amp)}${icon(ICONS.eye)}<span>»</span></div>
        <div class="jobs">${this.jobs.map(([i, c, t]) => html`<button class=${classMap({ job: true, on: i === "fox" })}>${icon(ICONS[i])}${c ? html`<span class="count">${c}</span>` : nothing}<span>${t}</span>${c ? html`<i class="caret"></i>` : nothing}</button>`)}</div>
        <div class="tray"><button class="round" aria-label="Afficher les icônes"><svg width="8" height="8"><path d="M6 1L2.500 4 6 7" fill="none" stroke="#fff" stroke-width="1.800"/></svg></button>
          ${["net", "green", "buddy", "smile", "sail"].map((n) => icon(ICONS[n]))}<span class="clock">23:21</span></div>
      </footer>
    </div>`;
  }
}
